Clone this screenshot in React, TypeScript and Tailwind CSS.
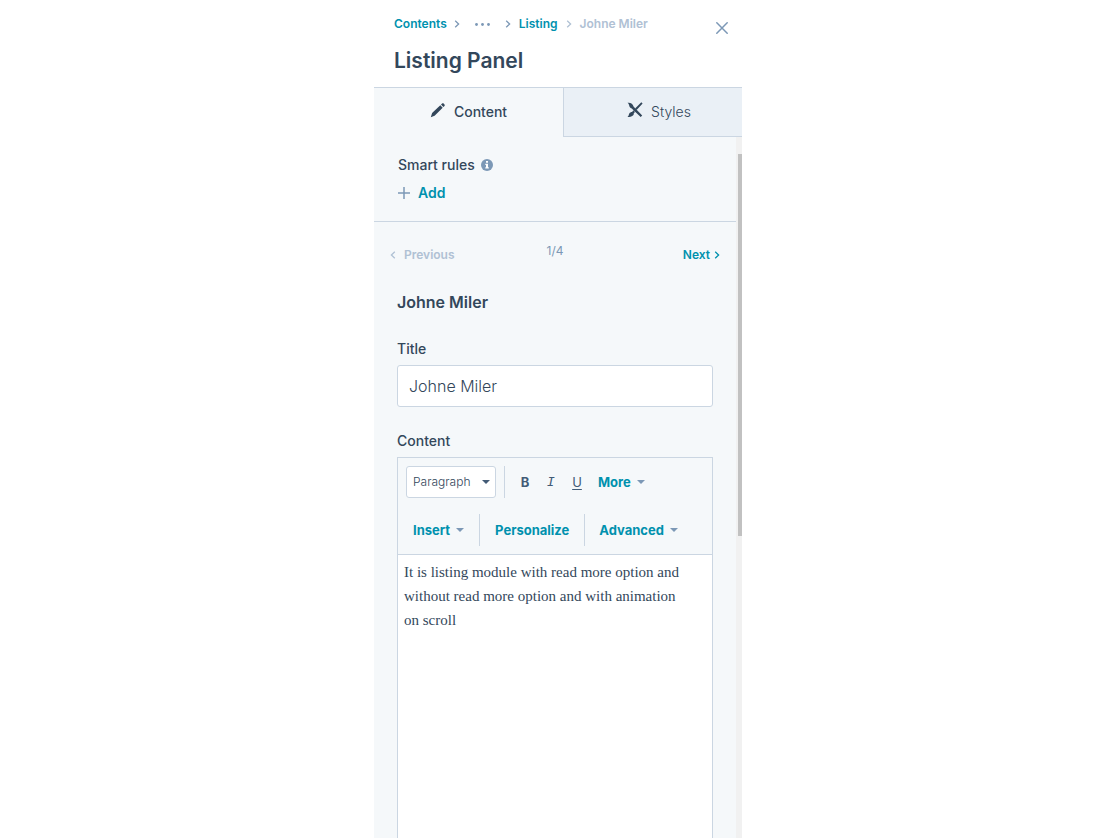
import { useState } from "react"

function Chevron({ className = "", left = false }: { className?: string; left?: boolean }) {
  return (
    <svg viewBox="0 0 6 8" className={`h-2 w-1.5 shrink-0 ${className}`} fill="none" stroke="currentColor" strokeWidth="1.3">
      <path d={left ? "M4.8 0.8 1.4 4l3.4 3.2" : "M1.2 0.8 4.6 4 1.2 7.2"} />
    </svg>
  )
}

function Caret({ className = "text-[#7c98b6]" }: { className?: string }) {
  return (
    <svg viewBox="0 0 8 4" className={`h-1 w-2 shrink-0 ${className}`} fill="currentColor">
      <path d="M0 0h8L4 4z" />
    </svg>
  )
}

function PencilIcon() {
  return (
    <svg viewBox="0 0 16 16" className="mb-1 size-4" fill="currentColor">
      <path d="M.8 15.200l1.300-4.100 8.200-7.800 2.400 2.400-8.100 8.100zM11 2.600l1.100-1c.4-.4 1.100-.4 1.500 0l.9.9c.4.4.4 1.100 0 1.500l-1.100 1z" />
    </svg>
  )
}

function StylesIcon() {
  return (
    <svg viewBox="0 0 16 16" className="mb-1 size-4" fill="currentColor">
      <path d="M.5.8C2.700.3 4.700 1 5.700 2.800l1 1.900 2 2.100 6.500 6.700-1.500 1.600L7 8.700 4.800 6.500C3 6.200 2.500 5 2.200 3.600 2 2.400 1.500 1.500.5.800z" />
      <path d="M14.300.3l1.300 1.100-6 6.600-1.500-1.500zM6.300 8.300l1.700 1.600-1.200 1.300c.2 1.900-1.300 3.700-6.300 3.800C2 13.800 1.700 12.600 2.300 11.500c.6-1 1.600-1.500 2.800-1.500z" />
    </svg>
  )
}

function InfoIcon() {
  return (
    <svg viewBox="0 0 12 12" className="size-3 text-[#7c98b6]">
      <circle cx="6" cy="6" r="6" fill="currentColor" />
      <path d="M5 2h2v1.700H5zM4.300 4.700H7v3.500h.8v1.200H4.300V8.200H5V5.900h-.7z" fill="#fff" />
    </svg>
  )
}

function Divider() {
  return <span className="h-8 w-px shrink-0 bg-[#cbd6e2]" />
}

export default function App() {
  const [tab, setTab] = useState("content")
  const [title, setTitle] = useState("Johne Miler")
  const [body, setBody] = useState(
    "It is listing module with read more option and without read more option and with animation on scroll"
  )

  const tabClass = (name: string) =>
    tab === name
      ? "border-b border-transparent bg-[#f5f8fa] font-medium"
      : "border-b border-l border-[#cbd6e2] bg-[#eaf0f6] font-light"

  return (
    <div className="h-screen overflow-hidden bg-white pr-px font-['Inter',sans-serif] text-[#33475b]">
      <main className="mx-auto flex h-full w-full max-w-[368px] flex-col">
        <header className="flex items-start justify-between pt-4 pr-3 pb-3 pl-5">
          <div>
            <nav aria-label="Breadcrumb" className="flex h-4 items-center text-xs font-semibold text-[#0091ae]">
              <a href="#contents">Contents</a>
              <Chevron className="ml-[7px] text-[#7c98b6]" />
              <button aria-label="Show more" className="mx-[15px] text-[#7c98b6]">
                <svg viewBox="0 0 15 3" className="h-[3px] w-[15px]" fill="currentColor">
                  <circle cx="1.500" cy="1.500" r="1.400" />
                  <circle cx="7.500" cy="1.500" r="1.400" />
                  <circle cx="13.500" cy="1.500" r="1.400" />
                </svg>
              </button>
              <Chevron className="mr-2 text-[#7c98b6]" />
              <a href="#listing">Listing</a>
              <Chevron className="mx-2 text-[#b0c1d4]" />
              <span className="text-[#b0c1d4]">Johne Miler</span>
            </nav>
            <h1 className="mt-[15px] text-[21px] leading-7 font-semibold">Listing Panel</h1>
          </div>
          <button aria-label="Close" className="mt-1 p-0.5 text-[#7c98b6]">
            <svg viewBox="0 0 12 12" className="size-3" fill="none" stroke="currentColor" strokeWidth="1.500" strokeLinecap="round">
              <path d="M.8.8l10.400 10.400M11.200.8.800 11.200" />
            </svg>
          </button>
        </header>

        <div role="tablist" className="flex h-[50px] shrink-0 border-t border-[#cbd6e2] text-sm">
          <button
            role="tab"
            aria-selected={tab === "content"}
            onClick={() => setTab("content")}
            className={`flex w-[189px] items-center justify-center gap-2 ${tabClass("content")}`}
          >
            <PencilIcon />
            Content
          </button>
          <button
            role="tab"
            aria-selected={tab === "styles"}
            onClick={() => setTab("styles")}
            className={`flex flex-1 items-center justify-center gap-2 pl-3 ${tabClass("styles")}`}
          >
            <StylesIcon />
            Styles
          </button>
        </div>

        <div className="flex min-h-0 flex-1 bg-[#f5f8fa]">
          <div className="flex min-w-0 flex-1 flex-col">
            <section className="border-b border-[#cbd6e2] px-6 py-4 text-sm">
              <h2 className="flex h-6 items-center gap-1.5 font-medium">
                Smart rules
                <InfoIcon />
              </h2>
              <button className="mt-1 flex h-6 items-center gap-2 font-semibold text-[#0091ae]">
                <svg viewBox="0 0 12 12" className="size-3 text-[#7c98b6]" fill="none" stroke="currentColor" strokeWidth="1.500">
                  <path d="M6 0v12M0 6h12" />
                </svg>
                Add
              </button>
            </section>

            <div className="grid grid-cols-3 items-center px-4 pt-5 text-xs font-semibold">
              <button disabled className="flex h-[26px] items-center gap-2 text-[#b0c1d4]">
                <Chevron left />
                Previous
              </button>
              <span className="self-start text-center leading-[18px] font-normal text-[#7c98b6]">1/4</span>
              <button className="flex h-[26px] items-center gap-1 justify-self-end text-[#0091ae]">
                Next
                <Chevron />
              </button>
            </div>

            <div className="flex min-h-0 flex-1 flex-col px-[23px] text-sm">
              <h3 className="mt-[22px] text-base leading-6 font-semibold">Johne Miler</h3>

              <label htmlFor="title" className="mt-[25px] leading-5 font-medium">Title</label>
              <input
                id="title"
                value={title}
                onChange={(e) => setTitle(e.target.value)}
                className="mt-1.5 h-[42px] w-full shrink-0 rounded-[3px] border border-[#cbd6e2] bg-white px-[11px] text-base font-light outline-none"
              />

              <label htmlFor="body" className="mt-6 leading-5 font-medium">Content</label>
              <div className="mt-1.5 flex min-h-0 flex-1 flex-col border border-b-0 border-[#cbd6e2]">
                <div className="border-b border-[#cbd6e2] text-[13px] font-bold text-[#0091ae]">
                  <div className="flex h-12 items-center pl-2">
                    <div className="relative">
                      <select
                        aria-label="Text style"
                        className="h-8 w-[90px] appearance-none rounded-[3px] border border-[#cbd6e2] bg-white pl-1.5 text-xs font-light text-[#33475b]"
                      >
                        <option>Paragraph</option>
                      </select>
                      <span className="pointer-events-none absolute top-3.5 right-1.5">
                        <Caret className="text-[#425b76]" />
                      </span>
                    </div>
                    <span className="w-2" />
                    <Divider />
                    <div className="ml-[7px] flex text-[#425b76]">
                      <button className="w-[26px] font-bold">B</button>
                      <button className="w-[26px] font-['DejaVu_Sans_Mono',monospace] font-normal italic">I</button>
                      <button className="w-[26px] font-normal underline underline-offset-2">U</button>
                    </div>
                    <button className="ml-2 flex items-center gap-1.5">
                      More
                      <Caret />
                    </button>
                  </div>
                  <div className="flex h-12 items-center">
                    <button className="flex items-center gap-1.5 px-[15px]">
                      Insert
                      <Caret />
                    </button>
                    <Divider />
                    <button className="px-[15px]">Personalize</button>
                    <Divider />
                    <button className="flex items-center gap-1.5 px-3.5">
                      Advanced
                      <Caret />
                    </button>
                  </div>
                </div>
                <textarea
                  id="body"
                  value={body}
                  onChange={(e) => setBody(e.target.value)}
                  className="min-h-0 w-full flex-1 resize-none bg-white pt-[5px] pr-7 pl-1.5 font-['Liberation_Serif',serif] text-[15px] leading-6 outline-none"
                />
              </div>
            </div>
          </div>

          <div className="flex w-1.5 flex-col items-end bg-[#f1f1f1] pt-[17px]">
            <div className="h-[382px] w-1 bg-[#c1c1c1]" />
          </div>
        </div>
      </main>
    </div>
  )
}
